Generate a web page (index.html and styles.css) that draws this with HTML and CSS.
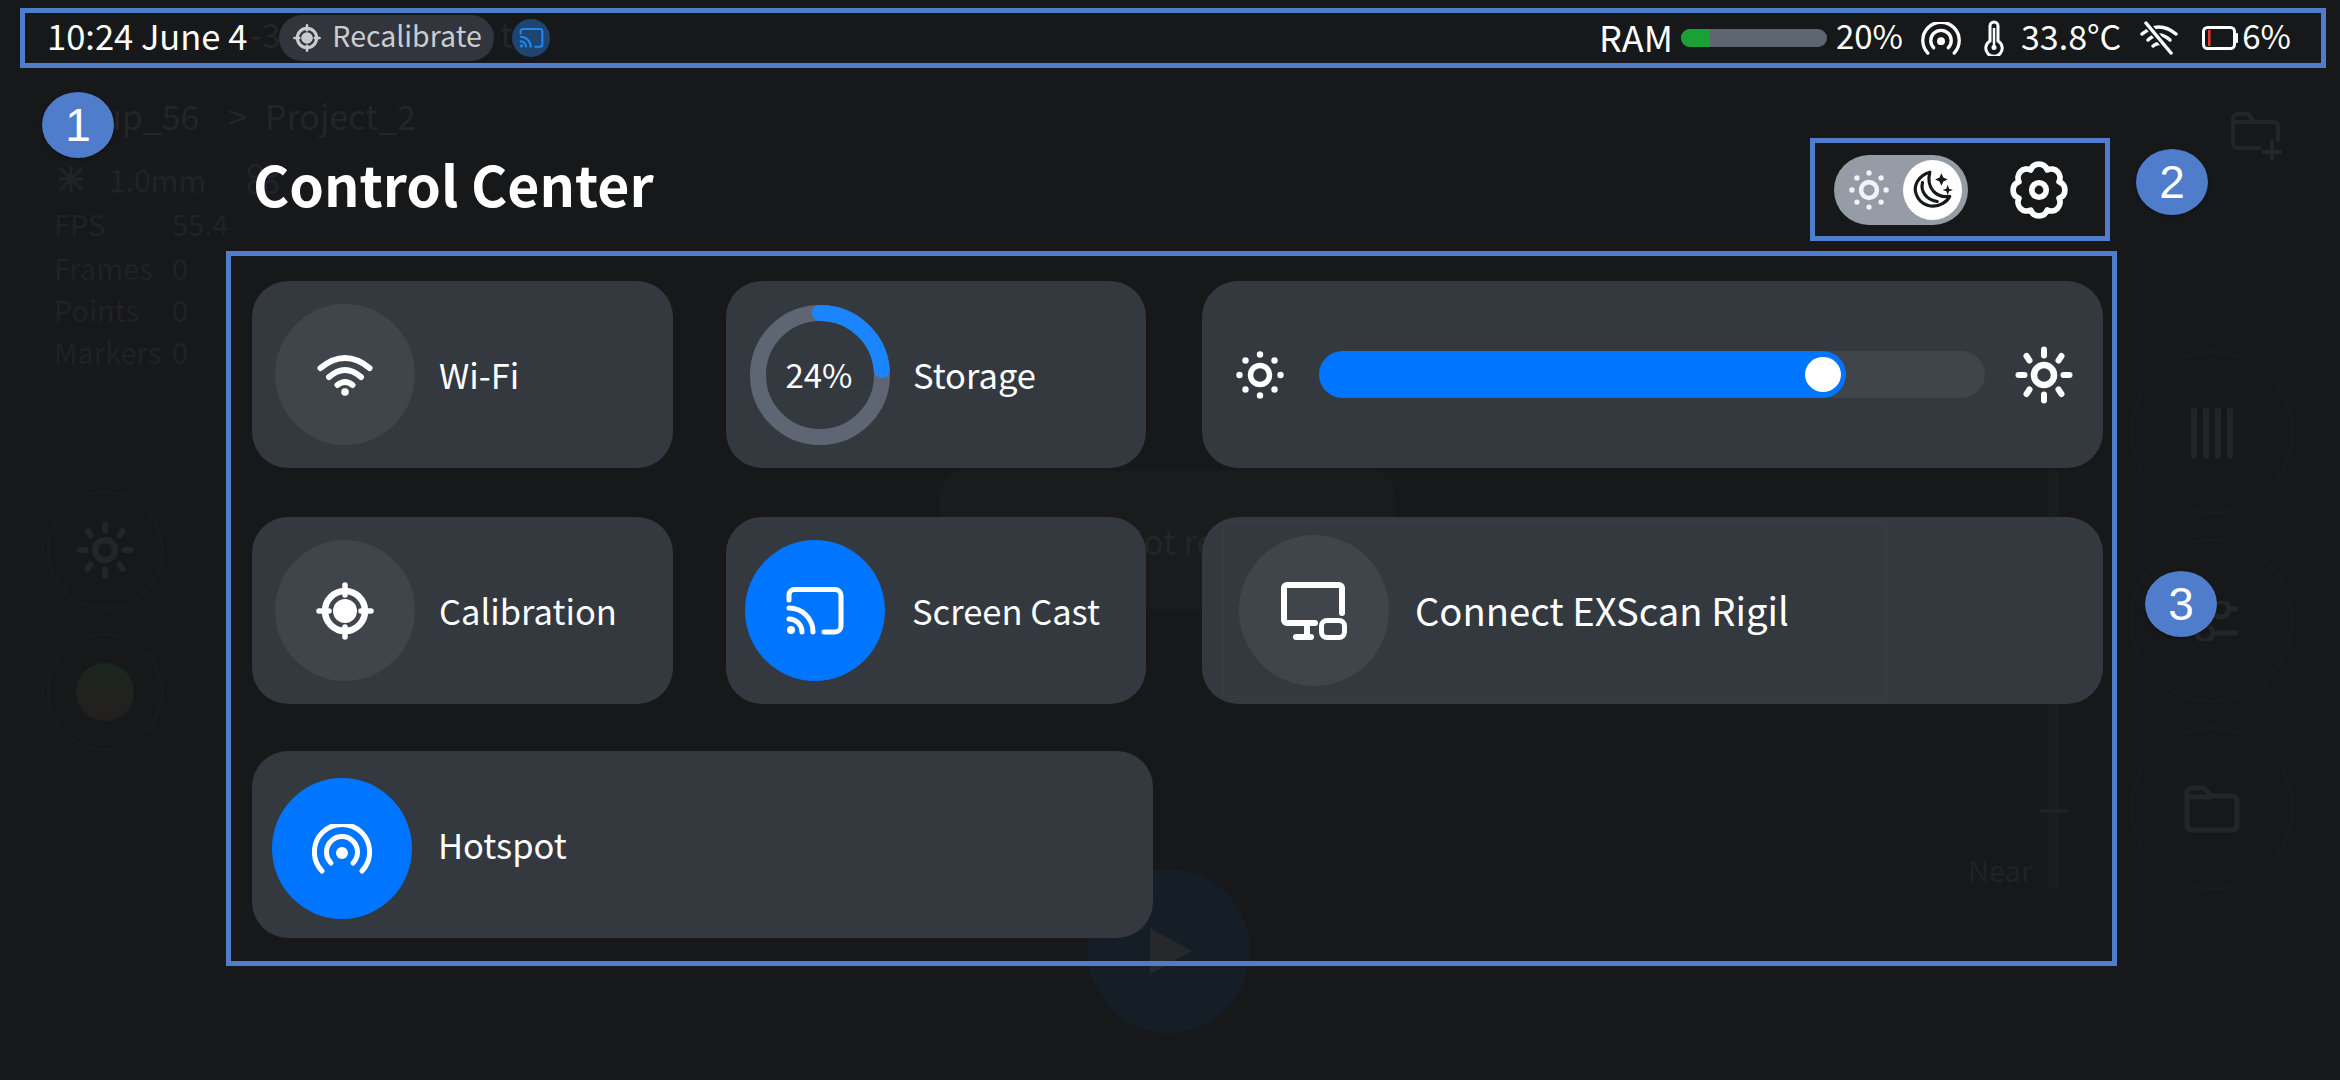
FILE: index.html
```html
<!DOCTYPE html>
<html lang="en">
<head>
<meta charset="utf-8">
<title>Control Center</title>
<link rel="stylesheet" href="styles.css">
</head>
<body>
<svg class="defs" width="0" height="0" aria-hidden="true">
  <defs>
    <symbol id="i-wifi" viewBox="0 0 56 42">
      <g fill="none" stroke="currentColor" stroke-width="6" stroke-linecap="round">
        <path d="M3.5 14 Q28 -6 52.5 14"/><path d="M12 23 Q28 9 44 23"/><path d="M20.500 31 Q28 25 35.500 31"/>
      </g>
      <circle cx="28" cy="38" r="3.800" fill="currentColor"/>
    </symbol>
    <symbol id="i-cast" viewBox="0 0 58 48">
      <g fill="none" stroke="currentColor" stroke-width="5" stroke-linecap="round">
        <path d="M3 13 V8 a5.500 5.500 0 0 1 5.500-5.500 H49 a6 6 0 0 1 6 6 V39 a6 6 0 0 1 -6 6 H38"/>
        <path d="M3 21 A24 24 0 0 1 27 45"/><path d="M3 32 A13 13 0 0 1 16 45"/>
      </g>
      <circle cx="5" cy="43" r="4" fill="currentColor"/>
    </symbol>
    <symbol id="i-hotspot" viewBox="0 0 60 50">
      <g fill="none" stroke="currentColor" stroke-width="5" stroke-linecap="round">
        <path d="M10 47 A27.600 27.600 0 1 1 50 47"/><path d="M19 39 A15.500 15.500 0 1 1 41 39"/>
      </g>
      <circle cx="30" cy="29" r="6" fill="currentColor"/>
    </symbol>
    <symbol id="i-target" viewBox="0 0 58 58">
      <circle cx="29" cy="29" r="20" fill="none" stroke="currentColor" stroke-width="6.500"/>
      <circle cx="29" cy="29" r="12" fill="currentColor"/>
      <g stroke="currentColor" stroke-width="5.500" stroke-linecap="round">
        <path d="M29 3 V13"/><path d="M29 45 V55"/><path d="M3 29 H13"/><path d="M45 29 H55"/>
      </g>
    </symbol>
    <symbol id="i-sun-dots" viewBox="0 0 48 48">
      <circle cx="24" cy="24" r="9.500" fill="none" stroke="currentColor" stroke-width="5.500"/>
      <g fill="currentColor">
        <circle cx="24" cy="3.500" r="3.200"/><circle cx="24" cy="44.500" r="3.200"/><circle cx="3.500" cy="24" r="3.200"/><circle cx="44.500" cy="24" r="3.200"/>
        <circle cx="9.500" cy="9.500" r="3.200"/><circle cx="38.500" cy="9.500" r="3.200"/><circle cx="9.500" cy="38.500" r="3.200"/><circle cx="38.500" cy="38.500" r="3.200"/>
      </g>
    </symbol>
    <symbol id="i-sun-rays" viewBox="0 0 58 58">
      <circle cx="29" cy="29" r="10" fill="none" stroke="currentColor" stroke-width="6.500"/>
      <g stroke="currentColor" stroke-width="6" stroke-linecap="round">
        <path d="M29 3.500 V9.500"/><path d="M29 48.500 V54.500"/><path d="M3.500 29 H9.500"/><path d="M48.500 29 H54.500"/>
        <path d="M11.500 10 L14.500 14.500"/><path d="M46.500 10 L43.500 14.500"/><path d="M11.500 48 L14.500 43.500"/><path d="M46.500 48 L43.500 43.500"/>
      </g>
    </symbol>
  </defs>
</svg>

<div class="screen">
  <div class="ghost" aria-hidden="true">
    <span class="g-text g-ver">-3</span>
    <span class="g-text g-ver2">t</span>
    <span class="g-text g-crumb1">up_56</span>
    <span class="g-text g-crumb-sep">&gt;</span>
    <span class="g-text g-crumb2">Project_2</span>
    <svg class="g-folder-plus" viewBox="0 0 52 48"><path d="M30 36 H7 a4 4 0 0 1 -4-4 V6 a4 4 0 0 1 4-4 H18 L24 10 H44 a4 4 0 0 1 4 4 V28 M4 10 H24 M33 40 H51 M42 30 V48" fill="none" stroke="currentColor" stroke-width="4" stroke-linecap="round"/></svg>
    <span class="g-pill g-pill-a"><svg viewBox="0 0 30 30" width="30" height="30"><path d="M4 4 L26 26 M26 4 L4 26 M15 2 V28 M3 15 H27" stroke="currentColor" stroke-width="3" fill="none"/></svg></span>
    <span class="g-pill g-pill-b">1.0mm</span>
    <span class="g-pill g-pill-c"><svg viewBox="0 0 32 32" width="32" height="32"><g fill="none" stroke="currentColor" stroke-width="3"><circle cx="8" cy="8" r="6"/><circle cx="24" cy="8" r="6"/><circle cx="8" cy="24" r="6"/><circle cx="24" cy="24" r="6"/></g></svg></span>
    <span class="g-text g-stat g-s1">FPS</span><span class="g-text g-stat g-v1">55.4</span>
    <span class="g-text g-stat g-s2">Frames</span><span class="g-text g-stat g-v2">0</span>
    <span class="g-text g-stat g-s3">Points</span><span class="g-text g-stat g-v3">0</span>
    <span class="g-text g-stat g-s4">Markers</span><span class="g-text g-stat g-v4">0</span>
    <span class="g-circle g-left1"><svg width="58" height="58"><use href="#i-sun-rays"/></svg></span>
    <span class="g-circle g-left2"><span class="g-dot"></span></span>
    <span class="g-circle g-right1"><span class="g-bars"><i></i><i></i><i></i><i></i></span></span>
    <span class="g-circle g-right2"><svg class="g-sliders" viewBox="0 0 52 40"><g fill="none" stroke="currentColor" stroke-width="5" stroke-linecap="round"><path d="M2 8 H24"/><path d="M46 8 H50"/><circle cx="35" cy="8" r="8"/><path d="M2 32 H9"/><path d="M30 32 H50"/><circle cx="19" cy="32" r="8"/></g></svg></span>
    <span class="g-circle g-right3"><svg viewBox="0 0 58 50" width="58" height="50"><path d="M4 8 a4 4 0 0 1 4-4 H21 L29 12 H50 a4 4 0 0 1 4 4 V42 a4 4 0 0 1 -4 4 H8 a4 4 0 0 1 -4-4 Z M4 13 H28" fill="none" stroke="currentColor" stroke-width="5"/></svg></span>
    <span class="g-toast"><span class="g-toast-text">Not ready</span></span>
    <span class="g-track"></span><span class="g-tick"></span>
    <span class="g-text g-near">Near</span>
    <span class="g-play"><svg viewBox="0 0 44 52" width="44" height="52"><path d="M0 3 L42 26 L0 49 Z" fill="currentColor"/></svg></span>
  </div>

  <header class="status-bar note-box">
    <span class="time txt">10:24 June 4</span>
    <span class="recal">
      <svg class="recal-icon" width="28" height="28"><use href="#i-target"/></svg>
      <span class="txt">Recalibrate</span>
    </span>
    <span class="cast-btn"><svg width="25" height="20"><use href="#i-cast"/></svg></span>
    <span class="status-right">
      <span class="txt ram-label">RAM</span>
      <span class="ram-bar"><span class="ram-fill"></span></span>
      <span class="txt pct m9">20%</span>
      <svg class="m18" width="40" height="33"><use href="#i-hotspot"/></svg>
      <svg class="m23" width="20" height="36" viewBox="0 0 20 36"><path d="M6 21 V6 a4 4 0 0 1 8 0 V21 a8.200 8.200 0 1 1 -8 0 Z" fill="none" stroke="currentColor" stroke-width="3"/><path d="M10 8 V27" stroke="currentColor" stroke-width="2.500"/><circle cx="10" cy="27.500" r="2.500" fill="currentColor"/></svg>
      <span class="txt m17">33.8°C</span>
      <svg class="m19" width="38" height="34" viewBox="0 0 38 34"><g fill="none" stroke="currentColor" stroke-width="3.500" stroke-linecap="round"><path d="M2 13 Q19 -1 36 13"/><path d="M8 19 Q19 9 30 19"/><path d="M13 25 Q19 20 25 25"/></g><path d="M6 2 L31 32" stroke="#16181a" stroke-width="7"/><path d="M6 2 L31 32" stroke="currentColor" stroke-width="3.500" stroke-linecap="round"/></svg>
      <svg class="m24" width="36" height="24" viewBox="0 0 36 24"><rect x="1.500" y="1.500" width="31" height="21" rx="4" fill="none" stroke="currentColor" stroke-width="3"/><rect x="33" y="7" width="3" height="10" rx="1" fill="currentColor"/><rect x="6" y="4" width="2.500" height="16" fill="#e8382f"/></svg>
      <span class="txt pct m4">6%</span>
    </span>
  </header>

  <main class="panel">
    <div class="panel-head">
      <h1 class="title">Control Center</h1>
      <div class="head-tools note-box">
        <span class="theme-toggle">
          <svg class="toggle-sun" width="40" height="40"><use href="#i-sun-dots"/></svg>
          <span class="knob">
            <svg width="42" height="42" viewBox="0 0 40 40"><g fill="none" stroke="#16181a" stroke-width="3" stroke-linejoin="round" stroke-linecap="round"><path d="M17 3 C6 6 1 16 4 24 C8 35 20 38 29 33 C33 31 35 28 36 26 C24 28 13 19 17 3 Z"/><path d="M10 13 C8 21 13 29 24 31"/></g><path d="M28 4 L29.800 8.200 L34 10 L29.800 11.800 L28 16 L26.200 11.800 L22 10 L26.200 8.200 Z M34 15 L35.300 18.700 L39 20 L35.300 21.300 L34 25 L32.700 21.300 L29 20 L32.700 18.700 Z" fill="#16181a"/></svg>
          </span>
        </span>
        <svg class="gear" width="60" height="60" viewBox="0 0 58 58"><path d="M37 9.600 A8.500 8.500 0 0 1 48.400 21 A8.500 8.500 0 0 1 48.400 37 A8.500 8.500 0 0 1 37 48.400 A8.500 8.500 0 0 1 21 48.400 A8.500 8.500 0 0 1 9.600 37 A8.500 8.500 0 0 1 9.600 21 A8.500 8.500 0 0 1 21 9.600 A8.500 8.500 0 0 1 37 9.600 Z" fill="none" stroke="currentColor" stroke-width="5.500" stroke-linejoin="round"/><circle cx="29" cy="29" r="7" fill="none" stroke="currentColor" stroke-width="5.500"/></svg>
      </div>
    </div>

    <section class="tiles note-box">
      <div class="row">
        <div class="card card-s">
          <span class="disc"><svg width="56" height="42"><use href="#i-wifi"/></svg></span>
          <span class="label">Wi-Fi</span>
        </div>
        <div class="card card-s card-storage">
          <span class="ring">
            <svg width="140" height="140" viewBox="0 0 140 140"><circle cx="70" cy="70" r="62" fill="none" stroke="#5e6673" stroke-width="16"/><path d="M70 8 A62 62 0 0 1 131.800 65" fill="none" stroke="#1a85ff" stroke-width="16" stroke-linecap="round"/></svg>
            <span class="ring-text">24%</span>
          </span>
          <span class="label">Storage</span>
        </div>
        <div class="card card-w card-bright">
          <svg width="48" height="48"><use href="#i-sun-dots"/></svg>
          <span class="slider"><span class="slider-fill"><span class="thumb"></span></span></span>
          <svg width="58" height="58"><use href="#i-sun-rays"/></svg>
        </div>
      </div>
      <div class="row">
        <div class="card card-s">
          <span class="disc"><svg width="58" height="58"><use href="#i-target"/></svg></span>
          <span class="label">Calibration</span>
        </div>
        <div class="card card-s card-cast">
          <span class="disc disc-on"><svg width="58" height="48"><use href="#i-cast"/></svg></span>
          <span class="label">Screen Cast</span>
        </div>
        <div class="card card-w card-rigil">
          <span class="disc disc-lg">
            <svg width="66" height="58" viewBox="0 0 66 58"><g fill="none" stroke="currentColor" stroke-width="6" stroke-linecap="round"><path d="M34 41 H6 a3 3 0 0 1 -3-3 V6 a3 3 0 0 1 3-3 H58 a3 3 0 0 1 3 3 V31"/><path d="M26 41 V55"/><path d="M15 55 H30"/></g><rect x="40.500" y="38.500" width="23" height="17" rx="5.500" fill="none" stroke="currentColor" stroke-width="5"/></svg>
          </span>
          <span class="label label-lg">Connect EXScan Rigil</span>
          <span class="focus-rect"></span>
        </div>
      </div>
      <div class="row row-last">
        <div class="card card-hot">
          <span class="disc disc-on disc-low"><svg width="60" height="50"><use href="#i-hotspot"/></svg></span>
          <span class="label">Hotspot</span>
        </div>
      </div>
    </section>
  </main>

  <span class="badge badge-1">1</span>
  <span class="badge badge-2">2</span>
  <span class="badge badge-3">3</span>
</div>
</body>
</html>
```
FILE: styles.css
```css
* { box-sizing: border-box; }
html, body { margin: 0; padding: 0; background: #16181a; }
.defs { position: absolute; }
.screen {
  position: relative;
  width: 2340px;
  height: 1080px;
  overflow: hidden;
  background: #16181a;
  color: #fff;
  font-family: "Noto Sans CJK SC", "Noto Sans", sans-serif;
}
.note-box { border: 5px solid #4f7ccb; }

/* dimmed view beneath the control centre */
.ghost { position: absolute; inset: 0; color: #232528; }
.ghost > * { position: absolute; }
.g-text { font-size: 34px; line-height: 1; white-space: nowrap; }
.g-ver { left: 250px; top: 17px; }
.g-ver2 { left: 500px; top: 17px; }
.g-crumb1 { left: 101px; top: 99px; }
.g-crumb-sep { left: 228px; top: 99px; }
.g-crumb2 { left: 265px; top: 99px; }
.g-folder-plus { left: 2230px; top: 112px; width: 52px; height: 48px; }
.g-pill { display: flex; align-items: center; justify-content: center; height: 44px; top: 157px; border-radius: 22px; background: #18191c; font-size: 30px; color: #212326; }
.g-pill-a { left: 50px; width: 42px; }
.g-pill-b { left: 102px; width: 105px; padding-left: 6px; }
.g-pill-c { left: 220px; width: 86px; }
.g-stat { font-size: 29px; color: #202225; }
.g-s1, .g-s2, .g-s3, .g-s4 { left: 54px; }
.g-v1, .g-v2, .g-v3, .g-v4 { left: 172px; }
.g-s1, .g-v1 { top: 209px; }
.g-s2, .g-v2 { top: 253px; }
.g-s3, .g-v3 { top: 295px; }
.g-s4, .g-v4 { top: 337px; }
.g-circle { display: flex; align-items: center; justify-content: center; border-radius: 50%; border: 2px solid #1a1c1e; }
.g-left1, .g-left2 { left: 47px; width: 116px; height: 118px; }
.g-left1 { top: 491px; }
.g-left2 { top: 633px; }
.g-dot { width: 58px; height: 58px; border-radius: 50%; background: linear-gradient(#1c2620, #241f1e); }
.g-right1, .g-right2, .g-right3 { left: 2130px; width: 163px; height: 163px; }
.g-right1 { top: 351px; }
.g-right2 { top: 539px; }
.g-right3 { top: 727px; }
.g-bars { display: flex; gap: 6px; height: 52px; }
.g-bars i { width: 6px; background: #222427; border-radius: 3px; }
.g-sliders { width: 52px; height: 40px; }
.g-toast { left: 940px; top: 471px; width: 455px; height: 138px; border-radius: 24px; background: #191b1d; display: flex; align-items: center; justify-content: center; padding-left: 56px; }
.g-toast-text { font-size: 34px; color: #232528; }
.g-track { left: 2048px; top: 470px; width: 11px; height: 419px; border-radius: 6px; background: #1a1d1e; }
.g-tick { left: 2040px; top: 809px; width: 28px; height: 4px; background: #1f2123; }
.g-near { left: 1968px; top: 855px; font-size: 29px; color: #202225; }
.g-play { left: 1088px; top: 869px; width: 162px; height: 164px; border-radius: 50%; background: #151e26; display: flex; align-items: center; justify-content: center; padding-left: 6px; color: #26282a; }

/* status bar */
.status-bar {
  position: relative;
  z-index: 1;
  display: flex;
  align-items: center;
  height: 60px;
  margin: 8px 14px 0 20px;
  padding: 0 30px 0 22px;
  font-size: 34px;
  white-space: nowrap;
}
.txt { margin-bottom: 5px; line-height: 1; }
.time { font-size: 34.5px; }
.recal {
  display: flex;
  align-items: center;
  gap: 11px;
  height: 46px;
  width: 215px;
  margin-left: 32px;
  padding-left: 14px;
  border-radius: 23px;
  background: #32363c;
  color: #c9ccd0;
  font-size: 28.5px;
}
.recal-icon { flex: none; }
.cast-btn {
  display: flex;
  align-items: center;
  justify-content: center;
  width: 38px;
  height: 38px;
  margin-left: 18px;
  border-radius: 50%;
  background: #204470;
  color: #1e88f0;
}
.status-right { display: flex; align-items: center; margin-left: auto; }
.ram-label { font-size: 36px; }
.pct { font-size: 33px; }
.ram-bar { width: 146px; height: 18px; margin-left: 8px; border-radius: 9px; background: #5e6670; overflow: hidden; }
.ram-fill { display: block; width: 20%; height: 100%; background: #1ba036; }
.m4 { margin-left: 4px; }
.m9 { margin-left: 9px; }
.m17 { margin-left: 17px; }
.m18 { margin-left: 18px; }
.m19 { margin-left: 19px; }
.m23 { margin-left: 23px; }
.m24 { margin-left: 24px; }

/* panel */
.panel { position: relative; z-index: 1; width: 1891px; margin-left: 226px; }
.panel-head { display: flex; align-items: center; justify-content: space-between; height: 103px; margin-top: 70px; padding: 0 7px 0 27px; }
.title { margin: 0 0 12px; font-size: 55.4px; font-weight: 700; line-height: 1; }
.head-tools { display: flex; align-items: center; width: 300px; height: 103px; padding: 0 0 0 19px; }
.theme-toggle { position: relative; display: flex; align-items: center; width: 134px; height: 70px; padding-left: 15px; border-radius: 35px; background: #969ca6; color: #f2f3f4; }
.knob { position: absolute; right: 6px; top: 5px; width: 59px; height: 60px; border-radius: 50%; background: #fff; display: flex; align-items: center; justify-content: center; }
.gear { margin-left: 41px; }

.tiles { display: flex; flex-direction: column; gap: 49px; height: 715px; margin-top: 10px; padding: 25px 0 0 21px; }
.row { display: flex; gap: 53px; }
.row-last { margin-top: -2px; }
.card { position: relative; display: flex; align-items: center; height: 187px; border-radius: 36px; background: #34383f; }
.card-s { width: 421px; padding-left: 23px; gap: 24px; }
.card-storage { width: 420px; padding-left: 24px; gap: 23px; }
.card-cast { width: 420px; padding-left: 19px; gap: 27px; }
.card-w { width: 901px; margin-left: 3px; }
.card-hot { width: 901px; padding-left: 20px; gap: 26px; }
.disc { display: flex; align-items: center; justify-content: center; flex: none; width: 140px; height: 141px; border-radius: 50%; background: #40444b; }
.disc-on { background: #0075ff; }
.disc-lg { width: 150px; height: 151px; }
.disc-low { margin-top: 8px; }
.label { font-size: 34.5px; line-height: 1; }
.label-lg { font-size: 38.2px; }
.card-rigil { padding-left: 37px; gap: 26px; }
.focus-rect { position: absolute; left: 21px; top: 5px; width: 664px; height: 175px; border: 1px solid #383c43; }
.ring { position: relative; flex: none; width: 140px; height: 140px; display: flex; align-items: center; justify-content: center; }
.ring svg { position: absolute; inset: 0; }
.ring-text { position: relative; right: 1px; font-size: 33px; line-height: 1; }
.card-bright { padding-left: 34px; }
.slider { display: block; width: 666px; height: 47px; margin: 0 30px 0 35px; border-radius: 24px; background: #40444b; }
.slider-fill { position: relative; display: block; width: 527px; height: 100%; border-radius: 24px; background: #0075ff; }
.thumb { position: absolute; right: 5px; top: 6px; width: 36px; height: 35px; border-radius: 50%; background: #fff; }

/* annotation markers */
.badge { position: absolute; z-index: 2; display: flex; align-items: center; justify-content: center; width: 72px; height: 66px; border-radius: 50%; background: #4f7ccb; color: #fff; font-family: "Liberation Sans", Arial, sans-serif; font-size: 46px; box-shadow: 0 1px 3px rgba(0,0,0,.4); }
.badge-1 { left: 42px; top: 92px; }
.badge-2 { left: 2136px; top: 149px; }
.badge-3 { left: 2145px; top: 571px; }
```
